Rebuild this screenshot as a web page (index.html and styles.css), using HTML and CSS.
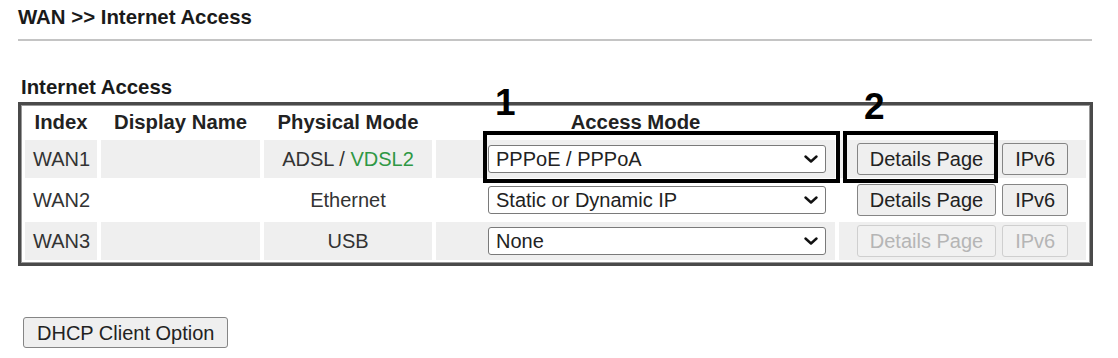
FILE: index.html
```html
<!DOCTYPE html>
<html>
<head>
<meta charset="utf-8">
<link rel="stylesheet" href="styles.css">
</head>
<body>
<div class="page">
  <h1 class="title">WAN &gt;&gt; Internet Access</h1>
  <div class="rule"></div>
  <h2 class="section">Internet Access</h2>
  <div class="table-wrap">
    <table class="wan">
      <colgroup>
        <col class="c-index"><col class="c-name"><col class="c-phys"><col class="c-mode"><col class="c-btns">
      </colgroup>
      <thead>
        <tr><th>Index</th><th>Display Name</th><th>Physical Mode</th><th>Access Mode</th><th></th></tr>
      </thead>
      <tbody>
        <tr class="shade">
          <td class="idx">WAN1</td><td></td>
          <td class="phys">ADSL / <span class="green">VDSL2</span></td>
          <td class="mode"><span class="sel"><select><option>PPPoE / PPPoA</option></select><svg class="chev" viewBox="0 0 14 8" width="14" height="8"><path d="M1.5 1.5 L7 6.5 L12.5 1.5" fill="none" stroke="#111" stroke-width="2.4" stroke-linecap="round" stroke-linejoin="round"/></svg></span></td>
          <td><div class="btns"><button class="btn">Details Page</button><button class="btn">IPv6</button></div></td>
        </tr>
        <tr>
          <td class="idx">WAN2</td><td></td>
          <td class="phys">Ethernet</td>
          <td class="mode"><span class="sel"><select><option>Static or Dynamic IP</option></select><svg class="chev" viewBox="0 0 14 8" width="14" height="8"><path d="M1.5 1.5 L7 6.5 L12.5 1.5" fill="none" stroke="#111" stroke-width="2.4" stroke-linecap="round" stroke-linejoin="round"/></svg></span></td>
          <td><div class="btns"><button class="btn">Details Page</button><button class="btn">IPv6</button></div></td>
        </tr>
        <tr class="shade">
          <td class="idx">WAN3</td><td></td>
          <td class="phys">USB</td>
          <td class="mode"><span class="sel"><select><option>None</option></select><svg class="chev" viewBox="0 0 14 8" width="14" height="8"><path d="M1.5 1.5 L7 6.5 L12.5 1.5" fill="none" stroke="#111" stroke-width="2.4" stroke-linecap="round" stroke-linejoin="round"/></svg></span></td>
          <td><div class="btns"><button class="btn" disabled>Details Page</button><button class="btn" disabled>IPv6</button></div></td>
        </tr>
      </tbody>
    </table>
    <div class="mark mark1"></div>
    <div class="mark mark2"></div>
    <div class="num num1">1</div>
    <div class="num num2">2</div>
  </div>
  <button class="btn dhcp">DHCP Client Option</button>
</div>
</body>
</html>
```

FILE: styles.css
```css
html, body {
  margin: 0;
  padding: 0;
  background: #fff;
}
body {
  font-family: "Liberation Sans", Arial, sans-serif;
  color: #222;
}
.page {
  width: 1074px;
  padding-left: 18px;
}
.title {
  font-size: 20.4px;
  font-weight: bold;
  line-height: 23px;
  margin: 6px 0 0 0;
  color: #1a1a1a;
}
.rule {
  height: 0;
  border-top: 2px solid #c4c4c4;
  margin-top: 10px;
}
.section {
  font-size: 20.4px;
  font-weight: bold;
  line-height: 23px;
  margin: 35px 0 3px 3px;
  color: #1a1a1a;
}
.table-wrap {
  position: relative;
  width: 1075px;
}
.wan {
  width: 1075px;
  table-layout: fixed;
  border: 3px solid #4a4a4a;
  box-shadow: inset 0 0 0 1px #999;
  border-spacing: 4px 3px;
  font-size: 20px;
  color: #333;
}
.c-index { width: 72px; }
.c-name { width: 159px; }
.c-phys { width: 168px; }
.c-mode { width: 399px; }
.c-btns { width: 247px; }
.wan th {
  height: 29px;
  padding: 0;
  font-weight: bold;
  font-size: 20.3px;
  text-align: center;
  color: #222;
  vertical-align: middle;
}
.wan td {
  height: 38px;
  padding: 0;
    vertical-align: middle;
}
.wan tr.shade td {
  background: #efefef;
}
.idx {
  padding-left: 8px !important;
}
.phys {
  text-align: center;
}
.green {
  color: #2f9845;
}
.mode {
  text-align: right;
  padding-right: 9px !important;
}
.sel {
  position: relative;
  display: inline-block;
  vertical-align: middle;
}
.sel select {
  appearance: none;
  -webkit-appearance: none;
  width: 338px;
  height: 28px;
  border: 1.5px solid #7a7a7a;
  border-radius: 3px;
  background: #fff;
  font-family: "Liberation Sans", Arial, sans-serif;
  font-size: 20px;
  color: #222;
  padding: 0 0 0 7px;
  margin: 0;
  display: block;
}
.chev {
  position: absolute;
  right: 8px;
  top: 10px;
  pointer-events: none;
}
.btns {
  display: flex;
  justify-content: center;
  gap: 6px;
}
.btn {
  font-family: "Liberation Sans", Arial, sans-serif;
  font-size: 20px;
  color: #222;
  background: #efefef;
  border: 1.5px solid #858585;
  border-radius: 3px;
  height: 32px;
  padding: 0 12px;
  margin: 0;
  line-height: 28px;
}
.btn:disabled {
  color: #b5b5b5;
  border-color: #cfcfcf;
  background: #f1f1f1;
}
.dhcp {
  margin: 51px 0 0 5px;
  height: 31px;
  padding: 0 13px;
}
.mark {
  position: absolute;
  border: 4px solid #000;
  box-sizing: border-box;
  top: 29px;
  height: 52px;
}
.mark1 {
  left: 465px;
  width: 357px;
}
.mark2 {
  left: 825px;
  width: 155px;
}
.num {
  position: absolute;
  font-size: 37px;
  font-weight: bold;
  line-height: 1;
  color: #000;
  top: -18px;
}
.num1 { left: 477px; }
.num2 { left: 846px; top: -14px; }
```
